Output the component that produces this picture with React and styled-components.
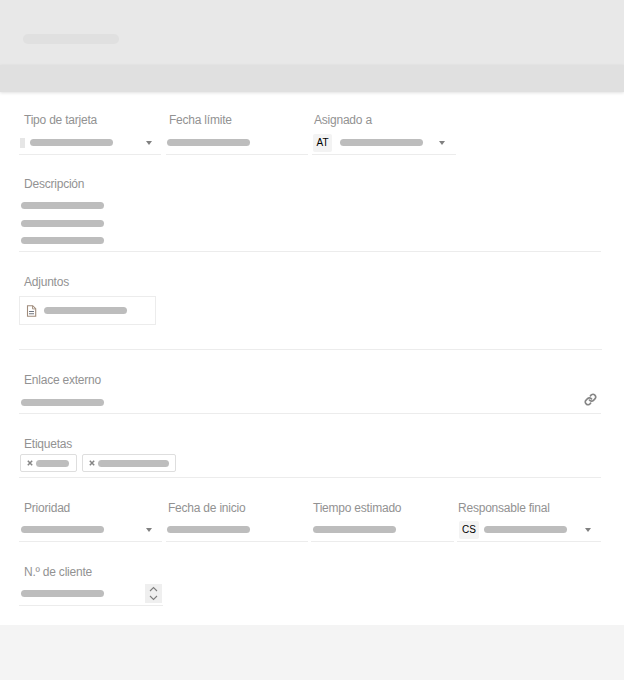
import React from 'react';
import styled, { createGlobalStyle } from 'styled-components';

const GlobalStyle = createGlobalStyle`
  html, body {
    margin: 0;
    padding: 0;
    background: #f4f4f4;
    font-family: "Liberation Sans", Arial, sans-serif;
  }
`;

function Caret() {
  return (
    <CaretIcon width="6" height="4" viewBox="0 0 6 4">
      <path d="M0 0h6L3 4z" fill="#808080" />
    </CaretIcon>
  );
}

function SelectField({ label, swatch, initials, initialsWidth, initialsGap, width, gap, height, inset, pad, right }) {
  return (
    <Field $width={width} $gap={gap} $height={height}>
      <Label $inset={inset}>{label}</Label>
      <Value $pad={pad} $right={right}>
        {swatch && <Swatch />}
        {initials && <Initials $width={initialsWidth} $gap={initialsGap}>{initials}</Initials>}
        <Bar />
        <Caret />
      </Value>
    </Field>
  );
}

function DateField({ label, width, gap, height, inset, pad }) {
  return (
    <Field $width={width} $gap={gap} $height={height}>
      <Label $inset={inset}>{label}</Label>
      <Value $pad={pad}>
        <Bar />
      </Value>
    </Field>
  );
}

function Chip({ width, right }) {
  return (
    <ChipBox $right={right}>
      <svg width="6" height="6" viewBox="0 0 6 6">
        <path d="M0.8 0.8l4.4 4.4M5.2 0.8L0.8 5.2" stroke="#858585" strokeWidth="1.5" />
      </svg>
      <Bar $width={width} />
    </ChipBox>
  );
}

export default function App() {
  return (
    <Page>
      <GlobalStyle />
      <Header>
        <TitleBar />
      </Header>
      <Strip />
      <Form>
        <Row>
          <SelectField label="Tipo de tarjeta" swatch width={142} height={43} />
          <DateField label="Fecha límite" width={142} gap={5} height={43} inset={3} pad={1} />
          <SelectField
            label="Asignado a"
            initials="AT"
            initialsWidth={19}
            initialsGap={4}
            width={144}
            gap={4}
            height={43}
            inset={2}
            pad={1}
            right={11}
          />
        </Row>

        <Description>
          <Label>Descripción</Label>
          <Lines>
            <Bar />
            <Bar />
            <Bar />
          </Lines>
        </Description>

        <Attachments>
          <Label>Adjuntos</Label>
          <FileBox>
            <svg width="11" height="12" viewBox="0 0 11 12" fill="none">
              <path d="M1.5 0.7h5.2l3 3v7.6h-8.2z" stroke="#a08c7c" strokeWidth="1.1" />
              <path d="M6.5 0.9v3h3" stroke="#a08c7c" strokeWidth="0.9" />
              <path d="M3 6.5h5M3 8.7h5" stroke="#6f7580" strokeWidth="1.1" />
            </svg>
            <Bar />
          </FileBox>
        </Attachments>

        <LinkField>
          <Label>Enlace externo</Label>
          <LinkValue>
            <Bar />
            <LinkIcon width="13" height="13" viewBox="0 0 24 24" fill="none" stroke="#858585" strokeWidth="3" strokeLinecap="round" strokeLinejoin="round">
              <path d="M10 13a5 5 0 0 0 7.5.5l3-3a5 5 0 0 0-7-7l-1.7 1.7" />
              <path d="M14 11a5 5 0 0 0-7.5-.5l-3 3a5 5 0 0 0 7 7l1.7-1.7" />
            </LinkIcon>
          </LinkValue>
        </LinkField>

        <Tags>
          <Label>Etiquetas</Label>
          <ChipRow>
            <Chip width={33} right={7} />
            <Chip width={71} right={6} />
          </ChipRow>
        </Tags>

        <BottomRow>
          <SelectField label="Prioridad" width={143} right={10} />
          <DateField label="Fecha de inicio" width={142} gap={4} inset={2} pad={1} />
          <DateField label="Tiempo estimado" width={143} gap={3} inset={2} />
          <SelectField
            label="Responsable final"
            initials="CS"
            initialsWidth={20}
            initialsGap={1}
            width={144}
            gap={3}
            inset={1}
            right={10}
          />
        </BottomRow>

        <NumberField $width={144}>
          <Label>N.º de cliente</Label>
          <Value>
            <Bar />
            <Stepper>
              <svg width="9" height="15" viewBox="0 0 9 15" fill="none" stroke="#7d7d7d" strokeWidth="1.1">
                <path d="M1 5l3.5-3.5L8 5M1 10l3.5 3.5L8 10" />
              </svg>
            </Stepper>
          </Value>
        </NumberField>
      </Form>
    </Page>
  );
}

const Page = styled.div`
  min-height: 680px;
  background: #f4f4f4;
`;

const Header = styled.div`
  height: 65px;
  background: #e8e8e8;
  padding: 34px 0 0 23px;
  box-sizing: border-box;
`;

const TitleBar = styled.div`
  width: 96px;
  height: 10px;
  border-radius: 5px;
  background: #e0e0e0;
`;

const Strip = styled.div`
  position: relative;
  height: 27px;
  background: #e0e0e0;
  box-shadow: 0 1px 3px rgba(0, 0, 0, 0.12);
`;

const Form = styled.div`
  height: 533px;
  box-sizing: border-box;
  padding: 20px 23px 0 19px;
  background: #fff;
`;

const Row = styled.div`
  display: flex;
`;

const BottomRow = styled.div`
  display: flex;
  margin-top: 22px;
`;

const Field = styled.div`
  display: flex;
  flex-direction: column;
  justify-content: space-between;
  flex: none;
  width: ${p => p.$width}px;
  height: ${p => p.$height || 42}px;
  margin-left: ${p => p.$gap || 0}px;
  box-sizing: border-box;
  border-bottom: 1px solid #ececec;
`;

const Label = styled.div`
  height: 16px;
  padding-left: ${p => p.$inset ?? 5}px;
  font-size: 12px;
  line-height: 16px;
  letter-spacing: -0.22px;
  color: #929292;
  white-space: nowrap;
`;

const Value = styled.div`
  display: flex;
  align-items: center;
  gap: 4px;
  height: 23px;
  padding: 0 ${p => p.$right ?? 9}px 0 ${p => p.$pad ?? 2}px;
`;

const Bar = styled.div`
  flex: none;
  width: ${p => p.$width || 83}px;
  height: 7px;
  border-radius: 4px;
  background: #bdbdbd;
`;

const CaretIcon = styled.svg`
  flex: none;
  margin-left: auto;
`;

const Swatch = styled.div`
  flex: none;
  width: 5px;
  height: 10px;
  margin: 0 1px 0 -1px;
  background: #e6e6e6;
`;

const Initials = styled.div`
  flex: none;
  width: ${p => p.$width}px;
  height: 18px;
  margin-right: ${p => p.$gap}px;
  background: #f3f3f3;
  border-radius: 2px;
  font-size: 10px;
  line-height: 18px;
  text-align: center;
  color: #000;
`;

const Description = styled.div`
  margin-top: 21px;
  height: 76px;
  box-sizing: border-box;
  border-bottom: 1px solid #ececec;
`;

const Lines = styled.div`
  display: flex;
  flex-direction: column;
  gap: 10.5px;
  padding: 10px 0 0 2px;
`;

const Attachments = styled.div`
  margin: 22px -1px 0 0;
  height: 76px;
  box-sizing: border-box;
  border-bottom: 1px solid #ececec;
`;

const FileBox = styled.div`
  display: flex;
  align-items: center;
  gap: 7px;
  width: 137px;
  height: 29px;
  margin-top: 6px;
  padding-left: 6px;
  box-sizing: border-box;
  border: 1px solid #ececec;
`;

const LinkField = styled.div`
  margin-top: 22px;
  height: 42px;
  box-sizing: border-box;
  border-bottom: 1px solid #ececec;
`;

const LinkValue = styled.div`
  display: flex;
  align-items: center;
  justify-content: space-between;
  height: 21px;
  padding: 4px 4px 0 2px;
`;

const LinkIcon = styled.svg`
  margin-top: -6px;
`;

const Tags = styled.div`
  margin-top: 22px;
  height: 42px;
  box-sizing: border-box;
  border-bottom: 1px solid #ececec;
`;

const ChipRow = styled.div`
  display: flex;
  gap: 5px;
  padding: 2px 0 0 1px;
`;

const ChipBox = styled.div`
  display: flex;
  align-items: center;
  gap: 3px;
  height: 18px;
  padding: 0 ${p => p.$right}px 0 6px;
  box-sizing: border-box;
  border: 1px solid #dedede;
  border-radius: 2px;
`;

const NumberField = styled(Field)`
  margin-top: 22px;
`;

const Stepper = styled.div`
  display: flex;
  align-items: center;
  justify-content: center;
  flex: none;
  width: 17px;
  height: 19px;
  margin: 0 -8px 0 auto;
  background: #efefef;
`;
